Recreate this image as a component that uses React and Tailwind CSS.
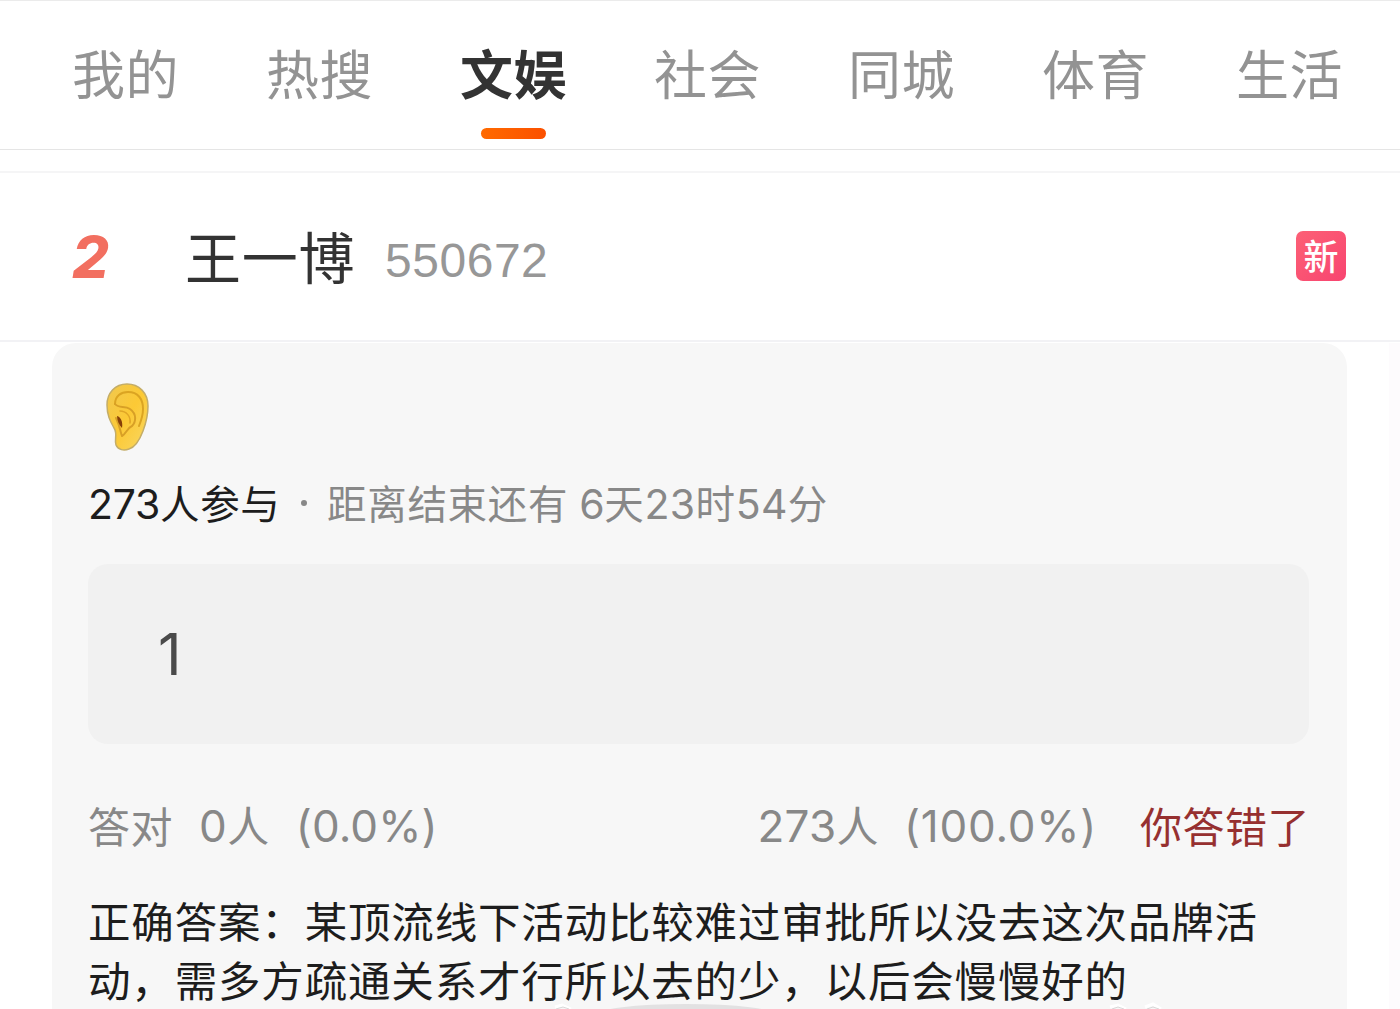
import React from 'react'

const tabs = ['我的', '热搜', '文娱', '社会', '同城', '体育', '生活']

const TabBar = ({ active }) => {
    return (
        <nav className="h-[150px] flex pl-[72px] border-t border-t-[#ebebeb] border-b border-b-[#e5e5e5]">
            {tabs.map(tab => (
                <div key={tab} className="w-[194px] shrink-0">
                    <div className="w-[107px] flex flex-col items-center">
                        <span
                            className={`mt-[41px] text-[53px] leading-[60px] tracking-[0.5px] whitespace-nowrap ${tab === active ? 'font-bold text-[#333333]' : 'text-[#939393]'}`}
                        >
                            {tab}
                        </span>
                        {tab === active && (
                            <span className="mt-[26px] w-[65px] h-[11px] rounded-full bg-linear-to-r from-[#ff6a00] to-[#fb5000]" />
                        )}
                    </div>
                </div>
            ))}
        </nav>
    )
}

const HotRow = ({ rank, name, count }) => {
    return (
        <div className="h-[171px] flex items-center pl-[72px] pr-[54px] border-t-2 border-t-[#f5f5f6] border-b-2 border-b-[#f2f2f5]">
            <span className="w-[113px] font-['Inter'] font-extrabold italic text-[58px] leading-[60px] text-[#f26f60]">{rank}</span>
            <span className="-mt-1 text-[56px] leading-[60px] tracking-[0.7px] text-[#333333]">{name}</span>
            <span className="ml-[30px] mt-2 font-['Liberation_Sans'] text-[48px] leading-[60px] tracking-[0.5px] text-[#979797]">{count}</span>
            <span className="ml-auto -mt-0.5 w-[50px] h-[50px] flex items-center justify-center rounded-[7px] bg-linear-to-br from-[#fc6076] to-[#f84470] text-white text-[35px] leading-[48px] pb-0.5 font-medium">新</span>
        </div>
    )
}

const EarIcon = () => {
    return (
        <svg className="w-[46px] h-[70px]" viewBox="0 0 46 70" fill="none">
            <defs>
                <linearGradient id="ear" x1="0" y1="0" x2="1" y2="1">
                    <stop offset="0" stopColor="#f0c850" />
                    <stop offset="0.5" stopColor="#fcc935" />
                    <stop offset="1" stopColor="#f8d865" />
                </linearGradient>
            </defs>
            <path
                d="M22 2C10 2 2 11 2 23C2 33 5 39 9 46C13 52 9 58 11 63C13 68 19 69 24 67C31 65 35 57 38 49C41 41 43 34 43 24C43 11 34 2 22 2Z"
                fill="url(#ear)"
                stroke="#c4ad68"
                strokeWidth="1.5"
            />
            <path d="M10 22C10 14 16 10 23 10C33 10 38 17 38 27C38 34 36 39 34 44" stroke="#dba422" strokeWidth="2" strokeLinecap="round" />
            <path d="M10 22C14 27 20 23 25 27C32 32 31 40 27 44C22 46 21 52 17 54C15 49 15 44 11 36" stroke="#d8a026" strokeWidth="2" strokeLinecap="round" strokeLinejoin="round" />
            <path d="M15 29C21 29 26 34 25 41" stroke="#e0a626" strokeWidth="1.5" strokeLinecap="round" />
            <path d="M12 34C16 35 18 40 17 46C14 43 12 38 12 34Z" fill="#873f08" />
        </svg>
    )
}

const Num = ({ children, className = '' }) => (
    <span className={`font-['Inter'] ${className}`}>{children}</span>
)

const QuizCard = () => {
    return (
        <section className="relative ml-[52px] w-[1295px] h-[666px] overflow-hidden rounded-t-[24px] bg-[#f7f7f7] pl-[36px]">
            <div className="pt-[39px] pl-[17px] h-[124px]">
                <EarIcon />
            </div>

            <div className="flex items-center h-[72px] text-[39.5px] leading-[60px] tracking-[0.7px] whitespace-nowrap">
                <span className="w-[213px] text-[#1d1d1d]">
                    <Num className="text-[41px] tracking-[-0.3px]">273</Num>人参与
                </span>
                <span className="w-[6px] h-[6px] rounded-full bg-[#888888]" />
                <span className="ml-[20px] text-[#888888]">
                    距离结束还有
                    <Num className="ml-[11px] text-[41px] tracking-[-0.3px]">6</Num>天<Num className="text-[41px] tracking-[0.3px]">23</Num>时<Num className="text-[41px] tracking-[0.3px]">54</Num>分
                </span>
            </div>

            <div className="mt-[25px] w-[1221px] h-[180px] flex items-center rounded-[20px] bg-[#f1f1f1] pl-[70px]">
                <Num className="text-[58px] leading-[60px] text-[#4a4a4a]">1</Num>
            </div>

            <div className="mt-[50px] w-[1222px] h-[62px] flex items-center text-[42px] leading-[60px] tracking-[0.5px] whitespace-nowrap text-[#888888]">
                <span>答对</span>
                <span className="ml-[26px]"><Num className="text-[44px]">0</Num>人</span>
                <span className="ml-[26px]"><Num className="text-[44px] tracking-[0.1px]">(0.0%)</Num></span>
                <span className="ml-auto"><Num className="text-[44px] tracking-[0.3px]">273</Num>人</span>
                <span className="ml-[25px]"><Num className="text-[44px] tracking-[0.75px]">(100.0%)</Num></span>
                <span className="ml-[43px] text-[#963030]">你答错了</span>
            </div>

            <p className="mt-[34px] text-[42.5px] leading-[59px] tracking-[0.83px] whitespace-nowrap text-[#1d1d1d]">
                正确答案：某顶流线下活动比较难过审批所以没去这次品牌活<br />
                动，需多方疏通关系才行所以去的少，以后会慢慢好的
            </p>

            <svg className="absolute left-0 bottom-0 w-[1295px] h-[8px]" viewBox="0 0 1295 8" fill="none">
                <ellipse cx="634" cy="14" rx="90" ry="11" fill="#e2e1e2" />
                <path d="M503 6L510 4L519 8M1058 6L1066 4L1074 8M1093 6L1101 3L1109 8" stroke="#ffffff" strokeWidth="3" />
                <path d="M504 8L511 6L517 8M1060 8L1066 6L1072 8M1095 8L1101 6L1107 8" stroke="#d8d8d8" strokeWidth="1" />
            </svg>
        </section>
    )
}

const App = () => {
    return (
        <main className="w-[1400px] h-[1009px] overflow-hidden bg-white font-['Noto_Sans_CJK_SC',sans-serif]">
            <TabBar active="文娱" />
            <div className="h-[21px]" />
            <HotRow rank={2} name="王一博" count="550672" />
            <div className="h-px" />
            <div className="flex justify-between">
                <QuizCard />
                <div className="w-[11px] bg-[#fdfbfd]" />
            </div>
        </main>
    )
}

export default App
